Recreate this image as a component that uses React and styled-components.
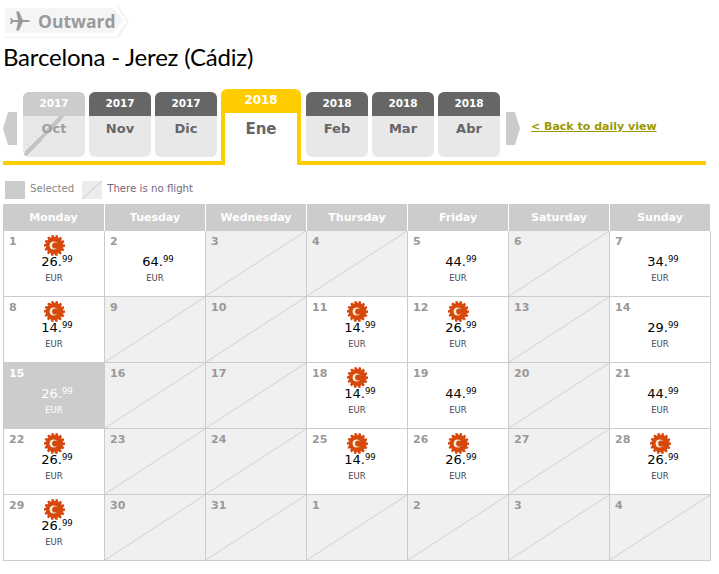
import React from "react";
import styled, { createGlobalStyle } from "styled-components";

const months = [
  { year: 2017, name: "Oct", off: true },
  { year: 2017, name: "Nov" },
  { year: 2017, name: "Dic" },
  { year: 2018, name: "Ene", active: true },
  { year: 2018, name: "Feb" },
  { year: 2018, name: "Mar" },
  { year: 2018, name: "Abr" },
];

const weekDays = ["Monday", "Tuesday", "Wednesday", "Thursday", "Friday", "Saturday", "Sunday"];

const days = [
  { day: 1, price: 26, promo: true },
  { day: 2, price: 64 },
  { day: 3 },
  { day: 4 },
  { day: 5, price: 44 },
  { day: 6 },
  { day: 7, price: 34 },
  { day: 8, price: 14, promo: true },
  { day: 9 },
  { day: 10 },
  { day: 11, price: 14, promo: true },
  { day: 12, price: 26, promo: true },
  { day: 13 },
  { day: 14, price: 29 },
  { day: 15, price: 26, selected: true },
  { day: 16 },
  { day: 17 },
  { day: 18, price: 14, promo: true },
  { day: 19, price: 44 },
  { day: 20 },
  { day: 21, price: 44 },
  { day: 22, price: 26, promo: true },
  { day: 23 },
  { day: 24 },
  { day: 25, price: 14, promo: true },
  { day: 26, price: 26, promo: true },
  { day: 27 },
  { day: 28, price: 26, promo: true },
  { day: 29, price: 26, promo: true },
  { day: 30 },
  { day: 31 },
  { day: 1 },
  { day: 2 },
  { day: 3 },
  { day: 4 },
];

function gearPoints() {
  const pts = [];
  for (let i = 0; i < 14; i++) {
    const a = (i / 14) * Math.PI * 2;
    const step = Math.PI / 28;
    [[-step, 10.5], [step, 10.5], [step * 2, 8.6], [step * 3, 8.6]].forEach(([d, r]) => {
      pts.push(`${(10.5 + r * Math.cos(a + d)).toFixed(2)},${(10.5 + r * Math.sin(a + d)).toFixed(2)}`);
    });
  }
  return pts.join(" ");
}

const PromoIcon = () => (
  <svg width="21" height="21" viewBox="0 0 21 21">
    <polygon points={gearPoints()} fill="#d6480c" />
    <circle cx="9.6" cy="10.5" r="4" fill="#f6efdc" />
    <circle cx="11.2" cy="10.5" r="3.1" fill="#d6480c" />
  </svg>
);

const PlaneIcon = () => (
  <svg width="20" height="20" viewBox="0 0 20 20">
    <path
      d="M0 7 L1.5 7 L3 9 L8 9 L6.2 0.5 L9 0.5 L12.8 9 L17.5 9 Q20 9.2 20 10 Q20 10.8 17.5 11 L12.8 11 L9 19.5 L6.2 19.5 L8 11 L3 11 L1.5 13 L0 13 L1 10 Z"
      fill="#9a9a9a"
    />
  </svg>
);

export default function App() {
  return (
    <>
      <GlobalStyle />
      <Page>
        <ChipOutline>
          <ChipGap>
            <Chip>
              <PlaneIcon />
              <span>Outward</span>
            </Chip>
          </ChipGap>
        </ChipOutline>
        <Title>Barcelona - Jerez (Cádiz)</Title>

        <MonthBar>
          <PrevArrow />
          <Tabs>
            {months.map((m) => (
              <MonthTab key={m.name} $active={m.active} $off={m.off}>
                <TabYear $active={m.active} $off={m.off}>{m.year}</TabYear>
                <TabName $active={m.active} $off={m.off}>{m.name}</TabName>
              </MonthTab>
            ))}
          </Tabs>
          <NextArrow />
          <BackLink href="#">&lt; Back to daily view</BackLink>
        </MonthBar>

        <Legend>
          <LegendSwatch />
          <LegendText>Selected</LegendText>
          <LegendSwatch $empty />
          <LegendText $empty>There is no flight</LegendText>
        </Legend>

        <Calendar>
          {weekDays.map((d) => (
            <WeekDay key={d}>{d}</WeekDay>
          ))}
          {days.map((d, i) => (
            <DayCell key={i} $empty={!d.price} $selected={d.selected}>
              <DayNumber $selected={d.selected}>{d.day}</DayNumber>
              {d.price && (
                <Offer>
                  <IconSlot>{d.promo && <PromoIcon />}</IconSlot>
                  <Price $selected={d.selected}>
                    {d.price}.<sup>99</sup>
                  </Price>
                  <Currency $selected={d.selected}>EUR</Currency>
                </Offer>
              )}
            </DayCell>
          ))}
        </Calendar>
      </Page>
    </>
  );
}

const GlobalStyle = createGlobalStyle`
  html, body {
    margin: 0;
    padding: 0;
    background: #fff;
    font-family: "DejaVu Sans", Verdana, sans-serif;
  }
`;

const Page = styled.div`
  width: 719px;
  height: 574px;
  padding: 6px 0 0 3px;
  box-sizing: border-box;
  overflow: hidden;
`;

const chipShape = "polygon(0 0, calc(100% - 11px) 0, 100% 50%, calc(100% - 11px) 100%, 0 100%)";

const ChipOutline = styled.div`
  width: 124px;
  height: 32px;
  margin-left: 2px;
  background: #f1f1f1;
  clip-path: ${chipShape};
`;

const ChipGap = styled.div`
  width: 122px;
  height: 31px;
  padding-top: 2px;
  box-sizing: border-box;
  background: #fff;
  clip-path: ${chipShape};
`;

const Chip = styled.div`
  display: flex;
  align-items: center;
  gap: 8px;
  width: 119px;
  height: 25px;
  box-sizing: border-box;
  padding-left: 5px;
  background: #f5f5f5;
  clip-path: ${chipShape};
  color: #9a9a9a;
  font-family: "Open Sans", sans-serif;
  font-size: 17.5px;
  font-weight: 700;
`;

const Title = styled.h1`
  margin: 4px 0 0;
  font-family: Lato, sans-serif;
  font-size: 24px;
  line-height: 30px;
  font-weight: 400;
  letter-spacing: -0.2px;
  color: #000;
`;

const MonthBar = styled.div`
  display: flex;
  align-items: flex-start;
  width: 703px;
  height: 72px;
  margin-top: 17px;
  border-bottom: 4px solid #ffcc00;
`;

const Arrow = styled.div`
  width: 14px;
  height: 33px;
  margin-top: 23px;
  background: #cccccc;
`;

const PrevArrow = styled(Arrow)`
  clip-path: polygon(5px 0, 100% 0, 100% 100%, 5px 100%, 0 50%);
`;

const NextArrow = styled(Arrow)`
  margin-left: 6px;
  clip-path: polygon(0 0, 9px 0, 100% 50%, 9px 100%, 0 100%);
`;

const Tabs = styled.div`
  display: flex;
  align-items: flex-start;
  gap: 4px;
  margin-left: 6px;
`;

const MonthTab = styled.div`
  width: ${(p) => (p.$active ? "80px" : "62px")};
  height: ${(p) => (p.$active ? "76px" : "65px")};
  margin: ${(p) => (p.$active ? "0 1px 0 0" : "3px 0 0")};
  box-sizing: border-box;
  border-radius: 6px;
  overflow: hidden;
  background: ${(p) => {
    if (p.$active) return "#fff";
    if (p.$off)
      return "linear-gradient(to bottom right, #e8e8e8 calc(50% - 2px), #c4c4c4 calc(50% - 2px), #c4c4c4 calc(50% + 2px), #e8e8e8 calc(50% + 2px))";
    return "#e8e8e8";
  }};
  ${(p) => p.$active && `
    border: solid #ffcc00;
    border-width: 0 4px;
    border-bottom-left-radius: 0;
    border-bottom-right-radius: 0;
  `}
`;

const TabYear = styled.div`
  height: 24px;
  line-height: 23px;
  margin: 0 ${(p) => (p.$active ? "-4px" : "0")};
  background: ${(p) => (p.$active ? "#ffcc00" : p.$off ? "#cccccc" : "#666666")};
  color: #fff;
  text-align: center;
  font-size: ${(p) => (p.$active ? "12px" : "10.5px")};
  font-weight: bold;
`;

const TabName = styled.div`
  padding-top: ${(p) => (p.$active ? "8px" : "5px")};
  text-align: center;
  font-size: ${(p) => (p.$active ? "15px" : "13px")};
  line-height: 16px;
  font-weight: bold;
  color: ${(p) => (p.$off ? "#a0a0a0" : "#666")};
`;

const BackLink = styled.a`
  margin: 31px 0 0 11px;
  color: #999900;
  font-size: 11px;
  line-height: 14px;
  font-weight: bold;
`;

const Legend = styled.div`
  display: flex;
  align-items: flex-start;
  height: 18px;
  margin: 16px 0 0 2px;
`;

const LegendSwatch = styled.div`
  width: 20px;
  height: 18px;
  margin-right: 5px;
  background: ${(p) =>
    p.$empty
      ? "linear-gradient(to bottom right, #ececec calc(50% - 1px), #cfcfcf 50%, #ececec calc(50% + 1px))"
      : "#cccccc"};
`;

const LegendText = styled.span`
  margin: 1px 8px 0 0;
  font-size: 10.2px;
  line-height: 14px;
  color: ${(p) => (p.$empty ? "#75687a" : "#888")};
`;

const Calendar = styled.div`
  display: grid;
  grid-template-columns: repeat(7, 101px);
  grid-auto-rows: 66px;
  grid-template-rows: 27px;
  margin-top: 5px;
  width: 708px;
`;

const WeekDay = styled.div`
  background: #cccccc;
  border-left: 1px solid #fff;
  color: #fff;
  font-size: 11px;
  font-weight: bold;
  line-height: 27px;
  text-align: center;

  &:first-child {
    border-left: 0;
  }
`;

const DayCell = styled.div`
  display: grid;
  box-sizing: border-box;
  margin-right: -1px;
  border: 1px solid #cccccc;
  border-top: 0;
  background: ${(p) => {
    if (p.$selected) return "#cccccc";
    if (p.$empty)
      return "linear-gradient(to bottom right, #f0f0f0 calc(50% - 1px), #d4d4d4 50%, #f0f0f0 calc(50% + 1px))";
    return "#fff";
  }};
`;

const DayNumber = styled.span`
  grid-area: 1 / 1;
  justify-self: start;
  margin: 4px 0 0 5px;
  font-size: 11px;
  line-height: 13px;
  font-weight: bold;
  color: ${(p) => (p.$selected ? "#fff" : "#999")};
`;

const Offer = styled.div`
  grid-area: 1 / 1;
  display: flex;
  flex-direction: column;
  align-items: center;
  padding-top: 4px;
`;

const IconSlot = styled.div`
  width: 21px;
  height: 20px;
`;

const Price = styled.div`
  margin-left: 6px;
  font-size: 13px;
  line-height: 14px;
  color: ${(p) => (p.$selected ? "#fff" : "#000")};

  sup {
    font-size: 8.5px;
    line-height: 0;
    vertical-align: 4px;
  }
`;

const Currency = styled.div`
  margin-top: 4px;
  font-size: 8.5px;
  line-height: 11px;
  color: ${(p) => (p.$selected ? "#fff" : "#445")};
`;
